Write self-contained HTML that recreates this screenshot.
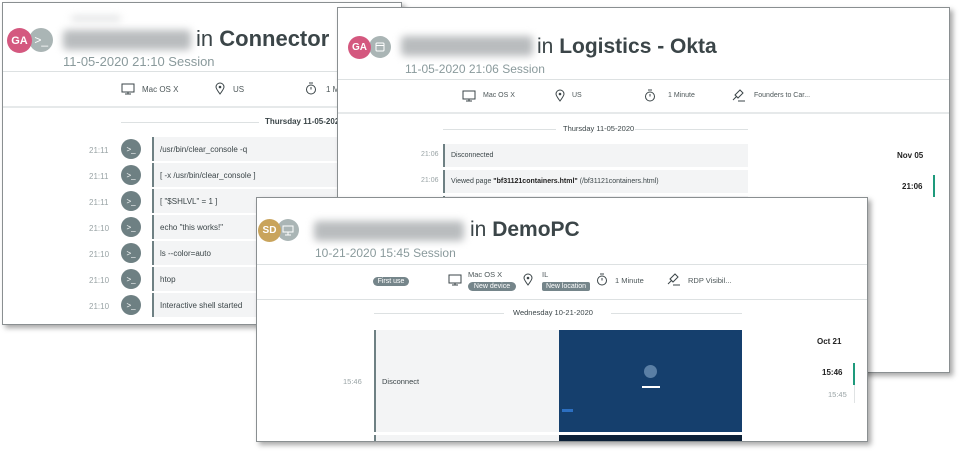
<!DOCTYPE html>
<html><head><style>
*{margin:0;padding:0;box-sizing:border-box}
body{width:960px;height:454px;background:#fff;position:relative;overflow:hidden;font-family:"Liberation Sans",sans-serif;color:#3b4548}
.p{position:absolute;background:#fff;border:1px solid #8a8f91;box-shadow:3px 3px 5px rgba(0,0,0,.35);overflow:hidden}
.a{position:absolute}
.av{position:absolute;border-radius:50%;color:#fff;font-size:12px;display:flex;align-items:center;justify-content:center}
.blur{position:absolute;background:#b9bcbe;filter:blur(4px);border-radius:4px}
.hl{position:absolute;height:1px;background:#dde1e2}
.sm{font-size:8px;color:#4d5759;position:absolute}
.t{font-size:8px;color:#9aa4a6;position:absolute}
.row{position:absolute;background:#f3f4f5;border-left:2px solid #6e8083;font-size:8px;color:#3b4548;padding-left:6px;display:flex;align-items:center}
.ci{position:absolute;width:20px;height:20px;border-radius:50%;background:#6e8083;color:#fff;font-size:8px;display:flex;align-items:center;justify-content:center}
.pill{position:absolute;background:#75858a;color:#fff;font-size:7px;border-radius:5px;height:9px;line-height:9px;text-align:center}
svg{position:absolute}
</style></head><body>

<!-- Panel 1 -->
<div class="p" style="left:2px;top:2px;width:400px;height:323px">
 <div class="av" style="left:26px;top:25px;width:24px;height:24px;background:#aab5b5;justify-content:flex-end;padding-right:5px">&gt;_</div>
 <div class="av" style="left:4px;top:25px;width:25px;height:25px;background:#d4587f;font-size:11px;font-weight:bold">GA</div>
 <div class="blur" style="left:60px;top:27px;width:128px;height:20px"></div>
 <div class="blur" style="left:68px;top:13px;width:50px;height:5px;opacity:.5"></div>
 <div class="a" style="left:193px;top:23px;font-size:22px;color:#3b4548;white-space:nowrap">in <b>Connector</b></div>
 <div class="a" style="left:60px;top:51px;font-size:13px;color:#8a9a9c">11-05-2020 21:10 Session</div>
 <div class="hl" style="left:0;top:68px;width:400px"></div>
 <svg style="left:118px;top:80px" width="14" height="12" viewBox="0 0 14 12"><rect x="1" y="1" width="12" height="8" fill="none" stroke="#3b4548"/><path d="M7 9v2M4 11h6" stroke="#3b4548"/></svg>
 <div class="sm" style="left:139px;top:82px">Mac OS X</div>
 <svg style="left:212px;top:79px" width="10" height="13" viewBox="0 0 10 13"><path d="M5 12C2 8 1 6 1 5a4 4 0 0 1 8 0c0 1-1 3-4 7z" fill="none" stroke="#3b4548"/><circle cx="5" cy="5" r="1.3" fill="#3b4548"/></svg>
 <div class="sm" style="left:230px;top:82px">US</div>
 <svg style="left:302px;top:79px" width="12" height="13" viewBox="0 0 12 13"><circle cx="6" cy="7.5" r="4.5" fill="none" stroke="#3b4548"/><path d="M4 1h4M6 7.5V5" stroke="#3b4548"/></svg>
 <div class="sm" style="left:323px;top:82px">1 M</div>
 <div class="hl" style="left:0;top:103px;width:400px;background:#e6e9ea;height:2px"></div>
 <div class="hl" style="left:118px;top:119px;width:138px"></div>
 <div class="a" style="left:262px;top:114px;font-size:8px;font-weight:bold;color:#3b4548">Thursday 11-05-2020</div>
 <div class="t" style="left:86px;top:143px">21:11</div><div class="ci" style="left:118px;top:136px">&gt;_</div><div class="row" style="left:149px;top:134px;width:260px;height:24px">/usr/bin/clear_console -q</div>
 <div class="t" style="left:86px;top:169px">21:11</div><div class="ci" style="left:118px;top:162px">&gt;_</div><div class="row" style="left:149px;top:160px;width:260px;height:24px">[ -x /usr/bin/clear_console ]</div>
 <div class="t" style="left:86px;top:195px">21:11</div><div class="ci" style="left:118px;top:188px">&gt;_</div><div class="row" style="left:149px;top:186px;width:260px;height:24px">[ "$SHLVL" = 1 ]</div>
 <div class="t" style="left:86px;top:221px">21:10</div><div class="ci" style="left:118px;top:214px">&gt;_</div><div class="row" style="left:149px;top:212px;width:260px;height:24px">echo "this works!"</div>
 <div class="t" style="left:86px;top:247px">21:10</div><div class="ci" style="left:118px;top:240px">&gt;_</div><div class="row" style="left:149px;top:238px;width:260px;height:24px">ls --color=auto</div>
 <div class="t" style="left:86px;top:273px">21:10</div><div class="ci" style="left:118px;top:266px">&gt;_</div><div class="row" style="left:149px;top:264px;width:260px;height:24px">htop</div>
 <div class="t" style="left:86px;top:299px">21:10</div><div class="ci" style="left:118px;top:292px">&gt;_</div><div class="row" style="left:149px;top:290px;width:260px;height:24px">Interactive shell started</div>
</div>

<!-- Panel 2 -->
<div class="p" style="left:337px;top:7px;width:613px;height:366px">
 <div class="av" style="left:31px;top:28px;width:22px;height:22px;background:#aab5b5"><svg style="left:5px;top:6px;position:static" width="10" height="10" viewBox="0 0 10 10"><rect x="1" y="1" width="8" height="8" rx="1" fill="none" stroke="#fff"/><path d="M1 3.5h8" stroke="#fff"/></svg></div>
 <div class="av" style="left:10px;top:28px;width:23px;height:23px;background:#d4587f;font-size:10px;font-weight:bold">GA</div>
 <div class="blur" style="left:63px;top:28px;width:132px;height:20px"></div>
 <div class="a" style="left:199px;top:27px;font-size:21px;color:#3b4548;white-space:nowrap">in <b>Logistics - Okta</b></div>
 <div class="a" style="left:67px;top:54px;font-size:12px;color:#8a9a9c">11-05-2020 21:06 Session</div>
 <div class="hl" style="left:0;top:71px;width:613px"></div>
 <svg style="left:124px;top:82px" width="14" height="12" viewBox="0 0 14 12"><rect x="1" y="1" width="12" height="8" fill="none" stroke="#3b4548"/><path d="M7 9v2M4 11h6" stroke="#3b4548"/></svg>
 <div class="sm" style="left:145px;top:84px;font-size:7px">Mac OS X</div>
 <svg style="left:217px;top:81px" width="10" height="13" viewBox="0 0 10 13"><path d="M5 12C2 8 1 6 1 5a4 4 0 0 1 8 0c0 1-1 3-4 7z" fill="none" stroke="#3b4548"/><circle cx="5" cy="5" r="1.3" fill="#3b4548"/></svg>
 <div class="sm" style="left:234px;top:84px;font-size:7px">US</div>
 <svg style="left:306px;top:81px" width="12" height="13" viewBox="0 0 12 13"><circle cx="6" cy="7.5" r="4.5" fill="none" stroke="#3b4548"/><path d="M4 1h4M6 7.5V5" stroke="#3b4548"/></svg>
 <div class="sm" style="left:330px;top:84px;font-size:7px">1 Minute</div>
 <svg style="left:394px;top:80px" width="14" height="14" viewBox="0 0 14 14"><path d="M3 7l5-5 3 3-5 5zM1 12l4-4M6 13h7" fill="none" stroke="#3b4548"/></svg>
 <div class="sm" style="left:416px;top:84px;font-size:7px">Founders to Car...</div>
 <div class="hl" style="left:0;top:104px;width:613px;height:2px;background:#e6e9ea"></div>
 <div class="hl" style="left:105px;top:121px;width:113px"></div>
 <div class="a" style="left:225px;top:116px;font-size:7.5px;color:#3b4548">Thursday 11-05-2020</div>
 <div class="hl" style="left:297px;top:121px;width:113px"></div>
 <div class="t" style="left:83px;top:143px;font-size:7px">21:06</div><div class="row" style="left:105px;top:136px;width:305px;height:23px;font-size:7px">Disconnected</div>
 <div class="t" style="left:83px;top:169px;font-size:7px">21:06</div><div class="row" style="left:105px;top:162px;width:305px;height:23px;font-size:7px">Viewed page&nbsp;<b style="color:#222">"bf31121containers.html"</b>&nbsp;(/bf31121containers.html)</div>
 <div class="row" style="left:105px;top:188px;width:305px;height:23px"></div>
 <div class="a" style="left:559px;top:143px;font-size:8px;font-weight:bold;color:#222">Nov 05</div>
 <div class="a" style="left:564px;top:174px;font-size:8px;font-weight:bold;color:#222">21:06</div>
 <div class="a" style="left:595px;top:167px;width:2px;height:22px;background:#1e9a7c"></div>
</div>

<!-- Panel 3 -->
<div class="p" style="left:256px;top:197px;width:612px;height:245px">
 <div class="av" style="left:20px;top:21px;width:22px;height:22px;background:#aab5b5"><svg style="position:static" width="12" height="11" viewBox="0 0 12 11"><rect x="1" y="1" width="10" height="6" fill="none" stroke="#fff"/><path d="M6 7v3M3 10h6" stroke="#fff"/></svg></div>
 <div class="av" style="left:1px;top:21px;width:23px;height:23px;background:#c9a45c;font-size:10px;font-weight:bold">SD</div>
 <div class="blur" style="left:57px;top:23px;width:150px;height:20px"></div>
 <div class="a" style="left:213px;top:20px;font-size:21px;color:#3b4548;white-space:nowrap">in <b>DemoPC</b></div>
 <div class="a" style="left:58px;top:48px;font-size:12px;color:#8a9a9c">10-21-2020 15:45 Session</div>
 <div class="hl" style="left:0;top:66px;width:612px"></div>
 <div class="pill" style="left:116px;top:79px;width:36px">First use</div>
 <svg style="left:191px;top:76px" width="14" height="12" viewBox="0 0 14 12"><rect x="1" y="1" width="12" height="8" fill="none" stroke="#3b4548"/><path d="M7 9v2M4 11h6" stroke="#3b4548"/></svg>
 <div class="sm" style="left:211px;top:72px;font-size:7.5px">Mac OS X</div>
 <div class="pill" style="left:211px;top:84px;width:48px">New device</div>
 <svg style="left:266px;top:75px" width="10" height="13" viewBox="0 0 10 13"><path d="M5 12C2 8 1 6 1 5a4 4 0 0 1 8 0c0 1-1 3-4 7z" fill="none" stroke="#3b4548"/><circle cx="5" cy="5" r="1.3" fill="#3b4548"/></svg>
 <div class="sm" style="left:285px;top:72px;font-size:7.5px">IL</div>
 <div class="pill" style="left:285px;top:84px;width:48px;border-radius:2px">New location</div>
 <svg style="left:339px;top:75px" width="12" height="13" viewBox="0 0 12 13"><circle cx="6" cy="7.5" r="4.5" fill="none" stroke="#3b4548"/><path d="M4 1h4M6 7.5V5" stroke="#3b4548"/></svg>
 <div class="sm" style="left:358px;top:78px;font-size:7.5px">1 Minute</div>
 <svg style="left:410px;top:74px" width="14" height="14" viewBox="0 0 14 14"><path d="M3 7l5-5 3 3-5 5zM1 12l4-4M6 13h7" fill="none" stroke="#3b4548"/></svg>
 <div class="sm" style="left:431px;top:78px;font-size:7.5px">RDP Visibil...</div>
 <div class="hl" style="left:0;top:101px;width:612px"></div>
 <div class="hl" style="left:117px;top:115px;width:130px"></div>
 <div class="a" style="left:256px;top:110px;font-size:7.5px;color:#3b4548">Wednesday 10-21-2020</div>
 <div class="hl" style="left:354px;top:115px;width:131px"></div>
 <div class="t" style="left:86px;top:179px;font-size:7.5px">15:46</div>
 <div class="row" style="left:117px;top:132px;width:185px;height:102px;font-size:7.5px;align-items:center">Disconnect</div>
 <div class="a" style="left:302px;top:132px;width:183px;height:102px;background:#153f6d">
  <div class="a" style="left:85px;top:35px;width:13px;height:13px;border-radius:50%;background:#5a7fa5"></div>
  <div class="a" style="left:83px;top:56px;width:18px;height:2px;background:#fff"></div>
  <div class="a" style="left:3px;top:79px;width:11px;height:3px;background:#2c6fc1"></div>
 </div>
 <div class="row" style="left:117px;top:237px;width:185px;height:10px"></div>
 <div class="a" style="left:302px;top:237px;width:183px;height:10px;background:#0d2138"></div>
 <div class="a" style="left:560px;top:139px;font-size:8px;font-weight:bold;color:#222">Oct 21</div>
 <div class="a" style="left:565px;top:170px;font-size:8px;font-weight:bold;color:#222">15:46</div>
 <div class="a" style="left:571px;top:192px;font-size:7.5px;color:#9aa4a6">15:45</div>
 <div class="a" style="left:596px;top:165px;width:2px;height:22px;background:#1e9a7c"></div>
 <div class="a" style="left:597px;top:187px;width:1px;height:18px;background:#e0e3e4"></div>
</div>
</body></html>
